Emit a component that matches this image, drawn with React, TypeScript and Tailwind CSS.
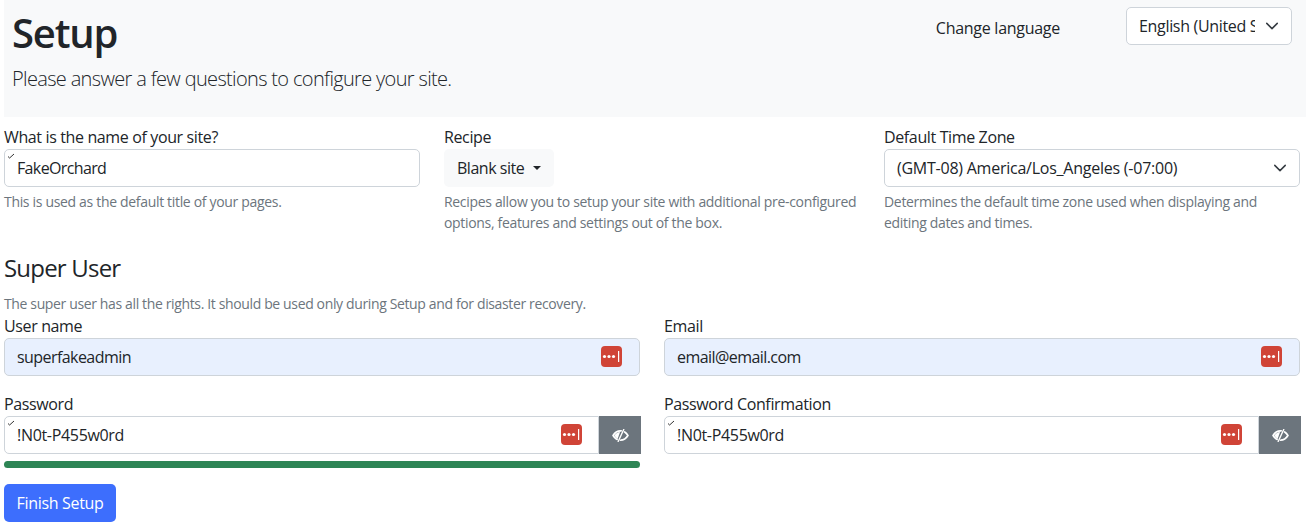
const font = "font-['Open_Sans',sans-serif]";

function Chevron() {
  return (
    <svg viewBox="0 0 16 16" className="absolute right-[13px] top-[12px] w-[14px] h-[14px] pointer-events-none" fill="none">
      <path d="M2 5l6 6 6-6" stroke="#343a40" strokeWidth="1.700" strokeLinecap="round" strokeLinejoin="round" />
    </svg>
  );
}

function Tick() {
  return (
    <svg viewBox="0 0 8 6" className="absolute left-[3px] top-[4px] w-[8px] h-[6px]" fill="none">
      <path d="M1 3.500l1.600 1.500L7 1" stroke="#333" strokeWidth="1" />
    </svg>
  );
}

function KeyIcon({ className }: { className: string }) {
  return (
    <svg viewBox="0 0 21 21" className={"absolute top-[8px] w-[21px] h-[21px] " + className}>
      <rect x="0" y="0" width="21" height="21" rx="4" fill="#d04437" />
      <circle cx="3.500" cy="10.500" r="1.600" fill="#fff" />
      <circle cx="8" cy="10.500" r="1.600" fill="#fff" />
      <circle cx="12.500" cy="10.500" r="1.600" fill="#fff" />
      <rect x="17" y="5" width="1.200" height="11" fill="#fff" />
    </svg>
  );
}

function EyeSlash() {
  return (
    <svg viewBox="0 0 18 14" className="w-[17px] h-[13px]" fill="none">
      <path d="M1 7c2-3.400 4.800-5 8-5s6 1.600 8 5c-2 3.400-4.800 5-8 5s-6-1.600-8-5z" stroke="#fff" strokeWidth="1.800" />
      <path d="M2.500 7C4 4.600 6 3.400 8.500 3.200L6 10.500C4.600 9.800 3.400 8.600 2.500 7z" fill="#fff" />
      <path d="M12.500 0.500L6.500 13.500" stroke="#6c757d" strokeWidth="2.400" />
      <path d="M12.500 0.500L6.500 13.500" stroke="#fff" strokeWidth="1.500" strokeLinecap="round" />
    </svg>
  );
}

function Label({ children }: { children: string }) {
  return <label className="block text-[16px] leading-[24px] tracking-[-0.023em] text-[#212529] h-[24px]">{children}</label>;
}

function Help({ children }: { children: string }) {
  return <p className="mt-[4px] text-[14px] leading-[21px] tracking-[-0.023em] text-[#6c757d]">{children}</p>;
}

function CredentialField({ label, value }: { label: string; value: string }) {
  return (
    <div className="w-[636px]">
      <Label>{label}</Label>
      <div className="relative">
        <input
          readOnly
          value={value}
          className="block w-full h-[38px] px-[12px] rounded-[5px] border border-[#ced4da] bg-[#e8f0fe] text-[16px] tracking-[-0.035em] text-[#212529] outline-none"
        />
        <KeyIcon className="right-[18px]" />
      </div>
    </div>
  );
}

function PasswordField({ label, value }: { label: string; value: string }) {
  return (
    <div className="w-[636px]">
      <Label>{label}</Label>
      <div className="flex w-[637px]">
        <div className="relative flex-1">
          <input
            readOnly
            value={value}
            className="block w-full h-[38px] px-[12px] rounded-l-[5px] border border-[#ced4da] bg-white text-[16px] tracking-[-0.02em] text-[#212529] outline-none"
          />
          <Tick />
          <KeyIcon className="right-[17px]" />
        </div>
        <button className="w-[42px] h-[38px] flex items-center justify-center bg-[#6c757d] shrink-0">
          <EyeSlash />
        </button>
      </div>
    </div>
  );
}

export default function App() {
  return (
    <div className={font + " pl-[4px] bg-white h-[525px] overflow-hidden text-[#212529]"}>
      <header className="h-[117px] bg-[#f8f9fa] flex justify-between pl-[8px] pr-[14px]">
        <div>
          <h1 className="mt-[9px] text-[40px] leading-[48px] font-[550] tracking-[-0.03em]">Setup</h1>
          <p className="mt-[7px] text-[20px] leading-[30px] font-light tracking-[-0.033em]">Please answer a few questions to configure your site.</p>
        </div>
        <div className="flex items-start">
          <span className="mt-[16px] mr-[66px] text-[16px] leading-[24px] tracking-[-0.017em]">Change language</span>
          <div className="relative mt-[7px] w-[166px]">
            <select className="block w-full h-[38px] pl-[12px] pr-[36px] rounded-[5px] border border-[#ced4da] bg-white text-[16px] tracking-[-0.02em] appearance-none outline-none">
              <option>English (United States)</option>
            </select>
            <Chevron />
          </div>
        </div>
      </header>

      <div className="w-[1296px] grid grid-cols-3 gap-x-[24px] mt-[8px]">
        <div>
          <Label>What is the name of your site?</Label>
          <div className="relative">
            <input
              readOnly
              value="FakeOrchard"
              className="block w-full h-[38px] px-[12px] rounded-[5px] border border-[#ced4da] bg-white text-[16px] tracking-[-0.04em] outline-none"
            />
            <Tick />
          </div>
          <Help>This is used as the default title of your pages.</Help>
        </div>
        <div>
          <Label>Recipe</Label>
          <button className="h-[38px] w-[110px] px-[13px] rounded-[5px] bg-[#f8f9fa] text-[16px] tracking-[-0.03em] text-[#212529] whitespace-nowrap flex items-center gap-[9px]">
            Blank site
            <span className="w-0 h-0 border-x-[4.8px] border-x-transparent border-t-[4.8px] border-t-[#212529]" />
          </button>
          <Help>Recipes allow you to setup your site with additional pre-configured options, features and settings out of the box.</Help>
        </div>
        <div>
          <Label>Default Time Zone</Label>
          <div className="relative">
            <select className="block w-full h-[38px] pl-[12px] pr-[36px] rounded-[5px] border border-[#ced4da] bg-white text-[16px] tracking-[-0.015em] appearance-none outline-none">
              <option>(GMT-08) America/Los_Angeles (-07:00)</option>
            </select>
            <Chevron />
          </div>
          <Help>Determines the default time zone used when displaying and editing dates and times.</Help>
        </div>
      </div>

      <h2 className="mt-[20px] text-[24px] leading-[29px] font-normal tracking-[-0.033em]">Super User</h2>
      <p className="mt-[11px] text-[14px] leading-[21px] tracking-[-0.026em] text-[#6c757d]">The super user has all the rights. It should be used only during Setup and for disaster recovery.</p>

      <div className="w-[1296px] grid grid-cols-2 gap-x-[24px]">
        <CredentialField label="User name" value="superfakeadmin" />
        <CredentialField label="Email" value="email@email.com" />
      </div>
      <div className="w-[1296px] grid grid-cols-2 gap-x-[24px] mt-[16px]">
        <PasswordField label="Password" value="!N0t-P455w0rd" />
        <PasswordField label="Password Confirmation" value="!N0t-P455w0rd" />
      </div>

      <div className="mt-[7px] w-[636px] h-[7px] rounded-[4px] bg-[#2e8555]" />

      <button className="mt-[16px] h-[38px] w-[112px] rounded-[5px] bg-[#3d6efd] text-white text-[16px] tracking-[-0.02em]">Finish Setup</button>
    </div>
  );
}
